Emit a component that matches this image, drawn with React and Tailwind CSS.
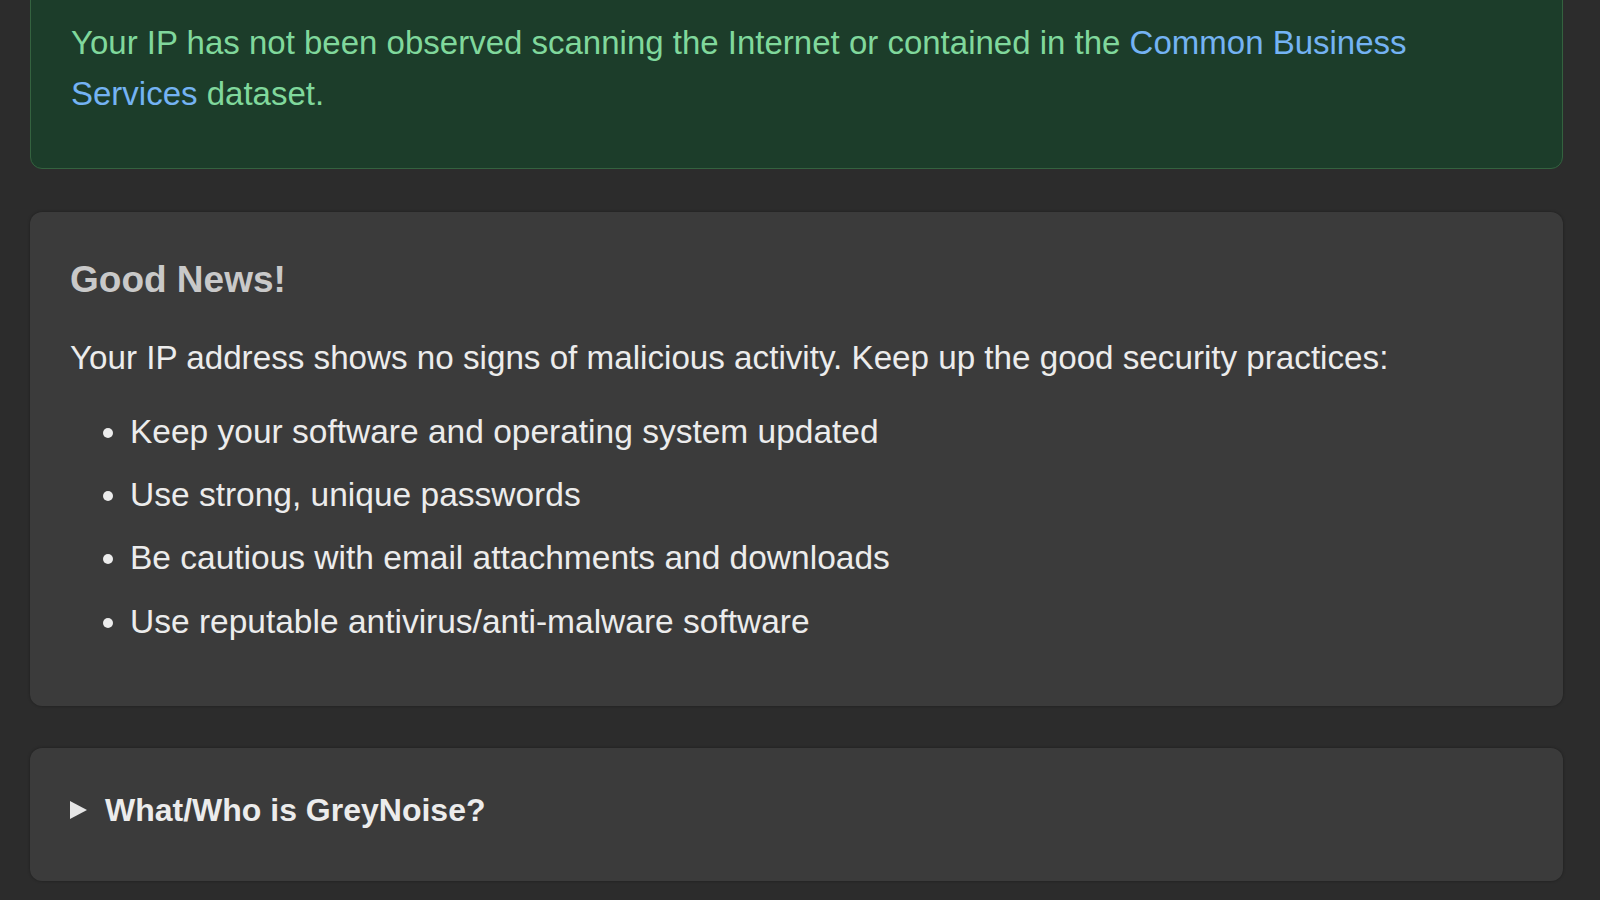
import React from 'react';

const tips = [
  'Keep your software and operating system updated',
  'Use strong, unique passwords',
  'Be cautious with email attachments and downloads',
  'Use reputable antivirus/anti-malware software',
];

const App = () => {
  return (
    <div className="min-h-screen bg-[#2c2c2c] overflow-hidden text-[33px] leading-[51.2px]" style={{ fontFamily: '"Liberation Sans", Arial, sans-serif' }}>
      <div className="ml-[30px] w-[1533px]">
        {/* Status box (top is scrolled out of view) */}
        <div className="-mt-[24px] rounded-xl border border-[#34623f] bg-[#1c3d2a] px-10 pt-10 pb-[49px]">
          <p className="text-[#80d89c]">
            Your IP has not been observed scanning the Internet or contained in the{' '}
            <a href="#" className="text-[#74b3f3]">Common Business Services</a> dataset.
          </p>
        </div>

        {/* Good news card */}
        <div className="mt-[43px] rounded-xl bg-[#3b3b3b] px-10 pt-[46px] pb-[59px] shadow-[0_0_3px_rgba(0,0,0,0.35)]">
          <h3 className="text-[37px] leading-[1.2] font-bold text-[#c9c9c9]">Good News!</h3>
          <p className="mt-[29px] text-[33.2px] text-[#ececec]">
            Your IP address shows no signs of malicious activity. Keep up the good security practices:
          </p>
          <ul className="mt-[23px] list-disc pl-[60px] text-[33.5px] text-[#ececec]">
            {tips.map((tip, i) => (
              <li key={i} className={i < tips.length - 1 ? 'mb-[12px]' : ''}>{tip}</li>
            ))}
          </ul>
        </div>

        {/* Collapsed details */}
        <div className="mt-[42px] rounded-xl bg-[#3b3b3b] px-10 pt-[37px] pb-[45px] shadow-[0_0_3px_rgba(0,0,0,0.35)]">
          <div className="flex items-center text-[32px] font-bold text-[#ececec]">
            <svg width="19" height="20" viewBox="0 0 19 20" className="mr-[17px] -ml-[1px]">
              <polygon points="1,1 18,10 1,19" fill="#e6e6e6" />
            </svg>
            <span>What/Who is GreyNoise?</span>
          </div>
        </div>
      </div>
    </div>
  );
};

export default App;
